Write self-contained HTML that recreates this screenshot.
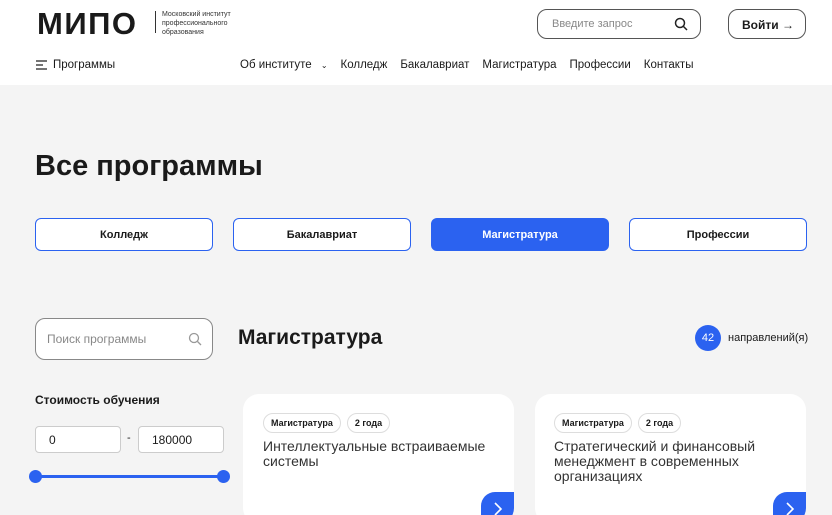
<!DOCTYPE html>
<html><head><meta charset="utf-8"><style>
*{box-sizing:border-box;margin:0;padding:0}
html,body{width:832px;height:515px;overflow:hidden}
body{background:#f4f4f4;font-family:"Liberation Sans",sans-serif;color:#1a1a1a;position:relative}
.abs{position:absolute}
header{position:absolute;left:0;top:0;width:832px;height:85px;background:#fff}
.tab{position:absolute;top:218px;width:178px;height:33px;border:1px solid #2b62f0;border-radius:6px;background:#fff;font-size:11px;font-weight:bold;display:flex;align-items:center;justify-content:center}
.tab.a{background:#2b62f0;color:#fff}
.card{position:absolute;top:394px;width:271px;height:130px;background:#fff;border-radius:16px;overflow:hidden}
.pill{display:inline-block;border:1px solid #ddd;border-radius:10px;font-size:9px;font-weight:bold;padding:4px 7px;margin-right:6px}
.card h3{font-weight:normal;font-size:14px;line-height:15px;color:#333;margin-top:6px}
.go{position:absolute;right:0;top:98px;width:33px;height:33px;background:#2b62f0;border-radius:14px 0 0 0}
.nav span{margin-right:13px}
</style></head><body>
<header>
<div class="abs" style="left:37px;top:6px;font-size:31px;font-weight:bold;letter-spacing:1.5px">МИПО</div>
<div class="abs" style="left:155px;top:11px;width:1px;height:22px;background:#333"></div>
<div class="abs" style="left:162px;top:10px;font-size:7px;line-height:9px;color:#333">Московский институт<br>профессионального<br>образования</div>
<div class="abs" style="left:537px;top:9px;width:164px;height:30px;border:1px solid #555;border-radius:10px;font-size:11px;color:#888;padding:8px 0 0 14px">Введите запрос
<svg class="abs" style="right:12px;top:7px" width="14" height="14" viewBox="0 0 14 14"><circle cx="6" cy="6" r="4.5" fill="none" stroke="#222" stroke-width="1.5"/><path d="M9.5 9.5L13 13" stroke="#222" stroke-width="1.5"/></svg></div>
<div class="abs" style="left:728px;top:9px;width:78px;height:30px;border:1px solid #555;border-radius:10px;font-size:12px;font-weight:bold;padding:8px 0 0 13px">Войти →</div>
<svg class="abs" style="left:36px;top:60px" width="11" height="10"><path d="M0 1h11M0 5h7M0 9h11" stroke="#222" stroke-width="1.3"/></svg>
<div class="abs" style="left:53px;top:59px;font-size:11.5px">Программы</div>
<div class="abs nav" style="left:240px;top:59px;font-size:11.5px;white-space:nowrap"><span>Об институте <b style="font-weight:normal;font-size:8px;margin-left:6px">⌄</b></span><span>Колледж</span><span>Бакалавриат</span><span>Магистратура</span><span>Профессии</span><span>Контакты</span></div>
</header>
<div class="abs" style="left:35px;top:150px;font-size:29px;font-weight:bold">Все программы</div>
<div class="tab" style="left:35px">Колледж</div>
<div class="tab" style="left:233px">Бакалавриат</div>
<div class="tab a" style="left:431px">Магистратура</div>
<div class="tab" style="left:629px">Профессии</div>
<div class="abs" style="left:35px;top:318px;width:178px;height:42px;border:1px solid #888;border-radius:10px;background:#fff;font-size:12px;color:#888;padding:13px 0 0 11px">Поиск программы
<svg class="abs" style="right:10px;top:13px" width="14" height="14" viewBox="0 0 14 14"><circle cx="6" cy="6" r="4.5" fill="none" stroke="#999" stroke-width="1.3"/><path d="M9.5 9.5L13 13" stroke="#999" stroke-width="1.3"/></svg></div>
<div class="abs" style="left:238px;top:326px;font-size:21px;font-weight:bold">Магистратура</div>
<div class="abs" style="left:695px;top:325px;width:26px;height:26px;border-radius:50%;background:#2b62f0;color:#fff;font-size:11px;text-align:center;line-height:26px">42</div>
<div class="abs" style="left:728px;top:332px;font-size:11px">направлений(я)</div>
<div class="abs" style="left:35px;top:393px;font-size:12px;font-weight:bold">Стоимость обучения</div>
<div class="abs" style="left:35px;top:426px;width:86px;height:27px;border:1px solid #ccc;border-radius:4px;background:#fff;font-size:12px;padding:6px 0 0 13px">0</div>
<div class="abs" style="left:127px;top:432px;font-size:11px">-</div>
<div class="abs" style="left:138px;top:426px;width:86px;height:27px;border:1px solid #ccc;border-radius:4px;background:#fff;font-size:12px;padding:6px 0 0 13px">180000</div>
<div class="abs" style="left:35px;top:475px;width:188px;height:3px;background:#2b62f0"></div>
<div class="abs" style="left:29px;top:470px;width:13px;height:13px;border-radius:50%;background:#2b62f0"></div>
<div class="abs" style="left:217px;top:470px;width:13px;height:13px;border-radius:50%;background:#2b62f0"></div>
<div class="card" style="left:243px;padding:19px 20px"><span class="pill">Магистратура</span><span class="pill">2 года</span><h3>Интеллектуальные встраиваемые системы</h3><div class="go"><svg style="position:absolute;left:12px;top:10px" width="10" height="14"><path d="M2 1l6 6-6 6" stroke="#fff" stroke-width="1.6" fill="none"/></svg></div></div>
<div class="card" style="left:535px;padding:19px 19px"><span class="pill">Магистратура</span><span class="pill">2 года</span><h3>Стратегический и финансовый менеджмент в современных организациях</h3><div class="go"><svg style="position:absolute;left:12px;top:10px" width="10" height="14"><path d="M2 1l6 6-6 6" stroke="#fff" stroke-width="1.6" fill="none"/></svg></div></div>
</body></html>
